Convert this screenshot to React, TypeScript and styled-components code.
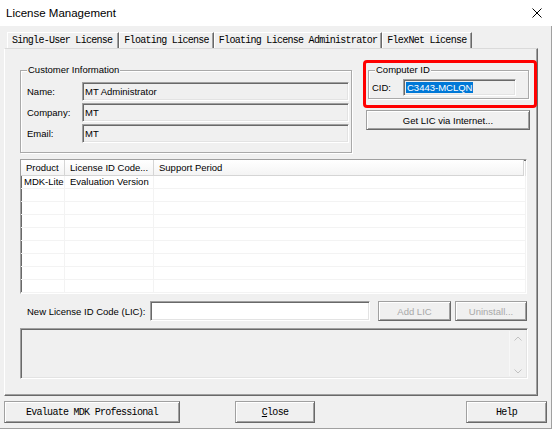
import styled, { createGlobalStyle, css } from 'styled-components';

const GlobalStyle = createGlobalStyle`
  html, body {
    margin: 0;
    padding: 0;
    background: #fff;
  }
  * {
    box-sizing: border-box;
  }
`;

const uiFont = `"Liberation Sans", Arial, sans-serif`;
const monoFont = `"Liberation Mono", "Courier New", monospace`;

const sunken = css`
  border: 1px solid;
  border-color: #a0a0a0 #fff #fff #a0a0a0;
  box-shadow: inset 1px 1px 0 #696969, inset -1px -1px 0 #e3e3e3;
`;

const raised = css`
  border: 1px solid;
  border-color: #a0a0a0 #696969 #696969 #a0a0a0;
  box-shadow: inset 1px 1px 0 #fff, inset -1px -1px 0 #a0a0a0;
`;

const etched = css`
  border: 1px solid #a9a9a9;
  box-shadow: inset 1px 1px 0 #fff, 1px 1px 0 #fff;
`;

const Window = styled.div`
  width: 554px;
  height: 429px;
  display: flex;
  flex-direction: column;
  background: #fff;
  overflow: hidden;
`;

const TitleBar = styled.div`
  height: 26px;
  flex: none;
  display: flex;
  align-items: center;
  justify-content: space-between;
  padding: 0 12px 1px 6px;
  background: #fff;
`;

const Title = styled.span`
  font: 11.5px ${uiFont};
  color: #000;
`;

const CloseIcon = styled.svg`
  width: 10px;
  height: 10px;
`;

const Body = styled.div`
  flex: 1;
  margin-right: 2px;
  background: #f0f0f0;
  border-right: 1px solid #a0a0a0;
  border-bottom: 1px solid #a0a0a0;
  display: flex;
  flex-direction: column;
  padding: 6px 0 0 4px;
`;

const TabStrip = styled.div`
  display: flex;
  height: 16px;
  padding-left: 3px;
`;

const Tab = styled.div<{ $active?: boolean }>`
  display: flex;
  align-items: center;
  padding: 0 ${(p) => (p.$active ? 6 : 4)}px 0 4px;
  font: 10px ${monoFont};
  letter-spacing: -0.72px;
  color: #000;
  border-top: 1px solid #fff;
  border-left: 1px solid #fff;
  border-right: 1px solid #696969;
  box-shadow: inset -1px 0 0 #a0a0a0;
  white-space: nowrap;
`;

const Panel = styled.div`
  width: 534px;
  height: 348px;
  border-top: 1px solid #dadada;
  border-left: 1px solid #fff;
  border-right: 1px solid #696969;
  border-bottom: 1px solid #696969;
  box-shadow: inset -1px -1px 0 #a0a0a0;
  padding: 11px 0 0 15px;
  display: flex;
  flex-direction: column;
`;

const TopRow = styled.div`
  display: flex;
  align-items: flex-start;
`;

const GroupBox = styled.div<{ $w: number }>`
  position: relative;
  width: ${(p) => p.$w}px;
  ${etched};
`;

const Legend = styled.span`
  position: absolute;
  top: -7px;
  left: 6px;
  padding: 0 1px;
  background: #f0f0f0;
  font: 9.5px/12px ${uiFont};
  color: #000;
`;

const CustomerGroup = styled(GroupBox)`
  margin-top: 10px;
  padding: 11px 2px 9px 6px;
  display: grid;
  grid-template-columns: 55px 267px;
  grid-auto-rows: 19px;
  row-gap: 2px;
`;

const Label = styled.span`
  align-self: center;
  font: 9.5px ${uiFont};
  color: #000;
  white-space: nowrap;
`;

const ReadOnlyField = styled.div`
  ${sunken};
  background: #f0f0f0;
  padding: 2px 0 0 2px;
  font: 9.5px/13px ${uiFont};
  color: #000;
`;

const RightColumn = styled.div`
  margin-left: 11px;
  width: 174px;
  display: flex;
  flex-direction: column;
`;

const Highlight = styled.div`
  width: 174px;
  height: 48px;
  border: 3px solid #ff0000;
  border-radius: 4px;
  padding: 7px 0 0 2px;
`;

const ComputerGroup = styled(GroupBox)`
  height: 29px;
  padding: 8px 0 0 3px;
  display: flex;
`;

const CidLabel = styled(Label)`
  width: 31px;
  align-self: flex-start;
  line-height: 17px;
`;

const CidField = styled(ReadOnlyField)`
  width: 113px;
  height: 17px;
  padding: 2px 0 0 2px;
  line-height: 11px;
`;

const Selected = styled.span`
  background: #0078d7;
  color: #fff;
  padding: 0 1px;
`;

const Button = styled.div<{ $w: number; $disabled?: boolean; $mono?: boolean }>`
  width: ${(p) => p.$w}px;
  height: 20px;
  flex: none;
  display: flex;
  align-items: center;
  justify-content: center;
  background: #f0f0f0;
  ${raised};
  font: ${(p) => (p.$mono ? `10px ${monoFont}` : `9.5px ${uiFont}`)};
  letter-spacing: ${(p) => (p.$mono ? '-0.72px' : 'normal')};
  color: ${(p) => (p.$disabled ? '#a8a8a8' : '#000')};
  white-space: nowrap;
`;

const LicButton = styled(Button)`
  margin: 2px 0 0 3px;
`;

const ListView = styled.div`
  margin-top: 6px;
  width: 507px;
  height: 135px;
  ${sunken};
  background: #fff;
  overflow: hidden;
`;

const cols = '44px 89px 1fr';

const HeaderRow = styled.div`
  display: grid;
  grid-template-columns: ${cols};
  height: 16px;
  background: linear-gradient(#fff, #f4f4f4);
  border-bottom: 1px solid #d5d5d5;
  margin-right: 2px;
`;

const HeaderCell = styled.div`
  padding-left: 5px;
  font: 9.5px/15px ${uiFont};
  color: #000;
  border-right: 1px solid #d5d5d5;
  white-space: nowrap;
  overflow: hidden;
`;

const Row = styled.div`
  display: grid;
  grid-template-columns: ${cols};
  height: 13px;
  border-bottom: 1px solid #f3f3f3;
`;

const Cell = styled.div<{ $first?: boolean }>`
  padding-left: ${(p) => (p.$first ? 3 : 5)}px;
  font: 9.5px/12px ${uiFont};
  color: #000;
  border-right: 1px solid #f3f3f3;
  white-space: nowrap;
  overflow: hidden;
`;

const LicRow = styled.div`
  margin-top: 7px;
  width: 508px;
  height: 20px;
  display: flex;
  align-items: center;
`;

const LicLabel = styled(Label)`
  width: 123px;
  margin-left: 7px;
`;

const LicInput = styled.div`
  width: 220px;
  height: 20px;
  ${sunken};
  background: #fff;
`;

const MessageBox = styled.div`
  margin-top: 7px;
  width: 508px;
  height: 51px;
  ${sunken};
  background: #f0f0f0;
  display: flex;
  justify-content: flex-end;
  padding: 2px;
`;

const ScrollBar = styled.div`
  width: 16px;
  display: flex;
  flex-direction: column;
  justify-content: space-between;
  align-items: center;
  padding: 5px 0 2px;
  border-left: 1px solid #f7f7f7;
`;

const ButtonRow = styled.div`
  display: flex;
  align-items: center;
  margin-top: 5px;
  padding-right: 4px;
`;

const DialogButton = styled(Button)`
  height: 22px;
`;

const tabs = ['Single-User License', 'Floating License', 'Floating License Administrator', 'FlexNet License'];

const customer = [
  { label: 'Name:', value: 'MT Administrator' },
  { label: 'Company:', value: 'MT' },
  { label: 'Email:', value: 'MT' },
];

const rows = [['MDK-Lite', 'Evaluation Version', ''], ...Array.from({ length: 8 }, () => ['', '', ''])];

const Chevron = ({ up }: { up?: boolean }) => (
  <svg width="8" height="5" viewBox="0 0 8 5">
    <path d={up ? 'M0.5 4.5L4 1l3.5 3.5' : 'M0.5 0.5L4 4l3.5-3.5'} fill="none" stroke="#c2c2c2" strokeWidth="1" />
  </svg>
);

const App = () => {
  return (
    <>
      <GlobalStyle />
      <Window>
        <TitleBar>
          <Title>License Management</Title>
          <CloseIcon viewBox="0 0 10 10">
            <path d="M0.5 0.5l9 9M9.5 0.5l-9 9" stroke="#000" strokeWidth="1" />
          </CloseIcon>
        </TitleBar>
        <Body>
          <TabStrip>
            {tabs.map((t, i) => (
              <Tab key={t} $active={i === 0}>
                {t}
              </Tab>
            ))}
          </TabStrip>
          <Panel>
            <TopRow>
              <CustomerGroup $w={332}>
                <Legend>Customer Information</Legend>
                {customer.flatMap((c) => [
                  <Label key={c.label}>{c.label}</Label>,
                  <ReadOnlyField key={c.label + 'v'}>{c.value}</ReadOnlyField>,
                ])}
              </CustomerGroup>
              <RightColumn>
                <Highlight>
                  <ComputerGroup $w={161}>
                    <Legend>Computer ID</Legend>
                    <CidLabel>CID:</CidLabel>
                    <CidField>
                      <Selected>C3443-MCLQN</Selected>
                    </CidField>
                  </ComputerGroup>
                </Highlight>
                <LicButton $w={164}>Get LIC via Internet...</LicButton>
              </RightColumn>
            </TopRow>
            <ListView>
              <HeaderRow>
                <HeaderCell>Product</HeaderCell>
                <HeaderCell>License ID Code...</HeaderCell>
                <HeaderCell>Support Period</HeaderCell>
              </HeaderRow>
              {rows.map((r, i) => (
                <Row key={i}>
                  <Cell $first>{r[0]}</Cell>
                  <Cell>{r[1]}</Cell>
                  <Cell>{r[2]}</Cell>
                </Row>
              ))}
            </ListView>
            <LicRow>
              <LicLabel>New License ID Code (LIC):</LicLabel>
              <LicInput />
              <Button $w={73} $disabled style={{ marginLeft: 8 }}>
                Add LIC
              </Button>
              <Button $w={72} $disabled style={{ marginLeft: 4 }}>
                Uninstall...
              </Button>
            </LicRow>
            <MessageBox>
              <ScrollBar>
                <Chevron up />
                <Chevron />
              </ScrollBar>
            </MessageBox>
          </Panel>
          <ButtonRow>
            <DialogButton $w={176} $mono>
              Evaluate MDK Professional
            </DialogButton>
            <DialogButton $w={80} $mono style={{ marginLeft: 55 }}>
              <u>C</u>lose
            </DialogButton>
            <DialogButton $w={81} $mono style={{ marginLeft: 'auto' }}>
              Help
            </DialogButton>
          </ButtonRow>
        </Body>
      </Window>
    </>
  );
};

export default App;
